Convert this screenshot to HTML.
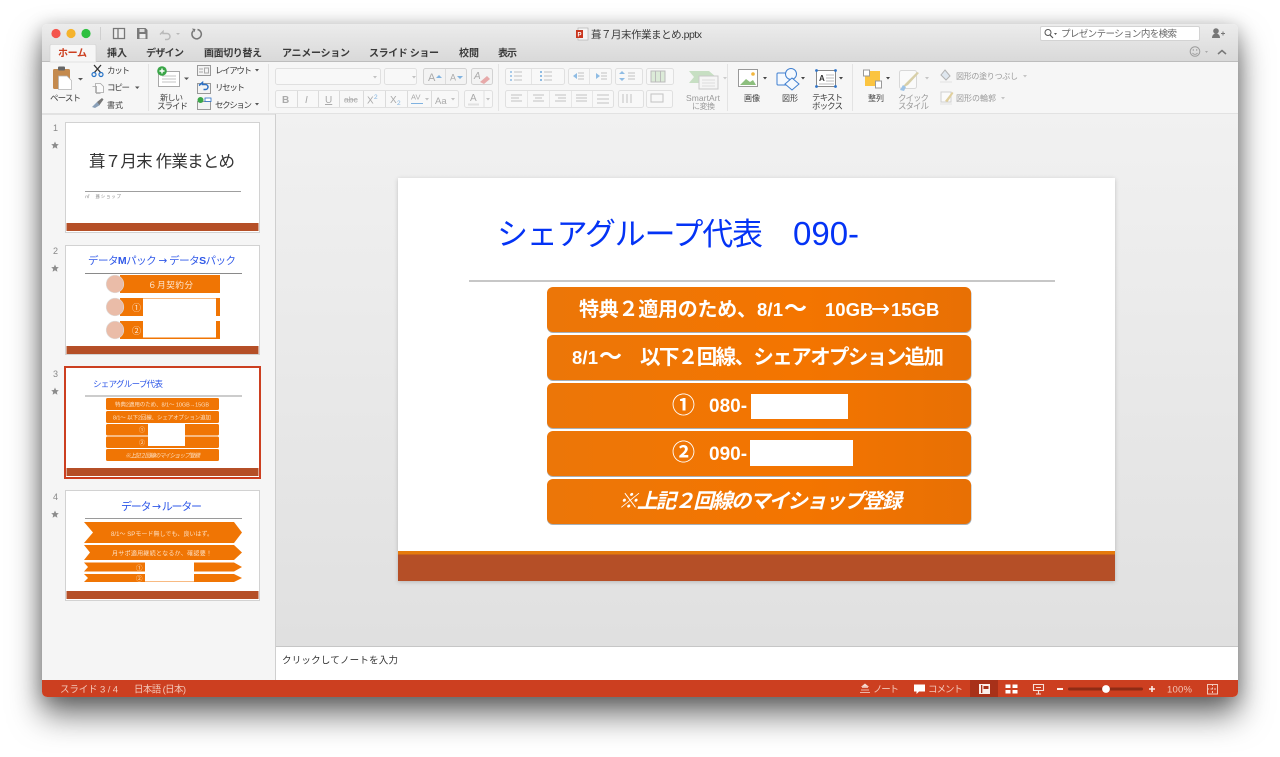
<!DOCTYPE html>
<html lang="ja"><head><meta charset="utf-8"><title>PowerPoint</title>
<style>
html,body{margin:0;padding:0;background:#fff;width:1280px;height:757px;overflow:hidden}
#win{position:absolute;left:42px;top:24px;width:1196px;height:673px;border-radius:5px;box-shadow:0 18px 32px rgba(0,0,0,.55),0 3px 18px rgba(0,0,0,.25)}
svg{position:absolute;left:0;top:0}
text{font-family:"Liberation Sans","Noto Sans CJK JP",sans-serif;dominant-baseline:auto}
.r{font-size:8.5px;fill:#3c3c3c}
.g{font-size:8.5px;fill:#9a9a9a}
.k{font-size:8px}
.tab{font-size:10px;font-weight:700;fill:#3a3a3a}
.s{font-size:9.5px;fill:#f3c9bb}
.w{fill:#fff;font-weight:700}
.ctl{fill:#f8f8f8;stroke:#e0e0e0}
.gl{fill:#b5b5b5;font-size:10px}
.ln{stroke:#c2c2c2;fill:none}
.ar{font-family:"DejaVu Sans",sans-serif}
</style></head><body>
<div id="win"></div>
<svg width="1280" height="757" viewBox="0 0 1280 757" xmlns="http://www.w3.org/2000/svg">
<defs>
<linearGradient id="tb" x1="0" y1="0" x2="0" y2="1"><stop offset="0" stop-color="#ececec"/><stop offset="1" stop-color="#d9d9d9"/></linearGradient>
<linearGradient id="mn" x1="0" y1="0" x2="0" y2="1"><stop offset="0" stop-color="#f1f1f1"/><stop offset="1" stop-color="#e0e0e0"/></linearGradient>
<linearGradient id="bar" x1="0" y1="0" x2="1" y2="0"><stop offset="0" stop-color="#ec7608"/><stop offset=".6" stop-color="#f47500"/><stop offset="1" stop-color="#e87004"/></linearGradient>
<clipPath id="wc"><rect x="42" y="24" width="1196" height="673" rx="5"/></clipPath>
<filter id="sl" x="-5%" y="-5%" width="110%" height="110%"><feDropShadow dx="0" dy="1" stdDeviation="2" flood-color="#000" flood-opacity=".2"/></filter>
</defs>
<g clip-path="url(#wc)">
<rect x="42" y="24" width="1196" height="37" fill="url(#tb)"/>
<rect x="42" y="61" width="1196" height="1" fill="#bdbdbd"/>
<rect x="42" y="62" width="1196" height="51" fill="#f6f6f6"/>
<rect x="42" y="113" width="1196" height="2" fill="#e2e2e2"/>
<rect x="42" y="115" width="233" height="565" fill="#f5f5f5"/>
<rect x="275" y="114" width="1" height="566" fill="#cfcfcf"/>
<rect x="276" y="114" width="962" height="532" fill="url(#mn)"/>
<rect x="276" y="646" width="962" height="1" fill="#c6c6c6"/>
<rect x="276" y="647" width="962" height="33" fill="#fff"/>
<rect x="42" y="680" width="1196" height="17" fill="#cc3f20"/>
</g>
<!-- traffic lights -->
<circle cx="56" cy="33.500" r="4.600" fill="#f4544c"/><circle cx="71" cy="33.500" r="4.600" fill="#f5b32c"/><circle cx="86" cy="33.500" r="4.600" fill="#2dc03f"/>
<rect x="100" y="27" width="1" height="13" fill="#cfcfcf"/>
<!-- toolbar icons -->
<path d="M113.500 28.500h11v10h-11zM118 28.500v10" fill="#eee" stroke="#777" stroke-width="1.300"/>
<path d="M137 28h8.500l2 2v9h-10.500z" fill="#7a7a7a"/><rect x="139.500" y="29" width="5" height="3" fill="#ddd"/><rect x="139.500" y="34" width="6" height="4.500" fill="#eee"/>
<path d="M160 34.500l3-3v2h4a3 3 0 0 1 0 6h-2" fill="none" stroke="#b9b9b9" stroke-width="1.500"/><path d="M176 33l2 2 2-2z" fill="#b9b9b9"/>
<path d="M197.500 29.500a4.700 4.700 0 1 1-4.200 1.300" fill="none" stroke="#777" stroke-width="1.500"/><path d="M192 28.500l3.500.5-1 3.200z" fill="#777"/>
<!-- title -->
<rect x="578" y="28" width="10" height="12" fill="#f5f5f5" stroke="#aaa" stroke-width=".6"/><rect x="576" y="30" width="7" height="8" fill="#c9361e"/><text x="577.500" y="36.500" font-size="6" fill="#fff" font-weight="700">P</text>
<text x="591" y="38" font-size="10.500" fill="#3a3a3a" textLength="111">葺７月末作業まとめ.pptx</text>
<!-- search -->
<rect x="1040.500" y="26.500" width="159" height="14" rx="1.500" fill="#fff" stroke="#d3d3d3"/>
<circle cx="1048" cy="32.500" r="3" fill="none" stroke="#555" stroke-width="1"/><path d="M1050 35l3 3" stroke="#555" stroke-width="1.200"/><path d="M1054 33l3 0-1.500 2z" fill="#555"/>
<text x="1061" y="37" font-size="9.500" fill="#666" textLength="116">プレゼンテーション内を検索</text>
<circle cx="1216" cy="31" r="2.800" fill="#777"/><path d="M1212 38c0-6 8-6 8 0z" fill="#777"/><path d="M1221 33.500h4M1223 31.500v4" stroke="#777" stroke-width="1"/>
<circle cx="1195" cy="51.500" r="4.800" fill="none" stroke="#9c9c9c"/><circle cx="1193.300" cy="50" r=".7" fill="#999"/><circle cx="1196.700" cy="50" r=".7" fill="#999"/><path d="M1192.500 53a3 3 0 0 0 5 0" fill="none" stroke="#999" stroke-width=".8"/>
<path d="M1205 51l3 0-1.500 2z" fill="#aaa"/><path d="M1218 54l4-3.500 4 3.500" fill="none" stroke="#777" stroke-width="1.500"/>
<!-- tabs -->
<path d="M50 61v-15a1.500 1.500 0 0 1 1.500-1.500h43a1.500 1.500 0 0 1 1.500 1.500v16h-46z" fill="#f6f6f6" stroke="#cfcfcf" stroke-width=".6"/>
<text x="58" y="56.500" font-size="10" font-weight="700" fill="#cc3f20" textLength="29">ホーム</text>
<text x="107" y="56.500" class="tab" textLength="20">挿入</text>
<text x="146" y="56.500" class="tab" textLength="38">デザイン</text>
<text x="204" y="56.500" class="tab" textLength="58">画面切り替え</text>
<text x="282" y="56.500" class="tab" textLength="68">アニメーション</text>
<text x="369" y="56.500" class="tab" textLength="70">スライド ショー</text>
<text x="459" y="56.500" class="tab" textLength="20">校閲</text>
<text x="498" y="56.500" class="tab" textLength="19">表示</text>
<!-- separators -->
<g fill="#e3e3e3"><rect x="148" y="64" width="1" height="47"/><rect x="268" y="64" width="1" height="47"/><rect x="498" y="64" width="1" height="47"/><rect x="727" y="64" width="1" height="47"/><rect x="852" y="64" width="1" height="47"/></g>
<!-- paste -->
<rect x="53" y="69" width="17" height="20" rx="1.500" fill="#c48a4e"/><rect x="58" y="66.500" width="7" height="4" rx="1" fill="#666"/>
<path d="M58.500 76h8.500l4.500 4.500v9h-13z" fill="#fff" stroke="#b3b3b3" stroke-width=".7"/>
<path d="M78 78h5l-2.500 2.500z" fill="#555"/>
<text x="50" y="101" class="r" textLength="31">ペースト</text>
<!-- scissors -->
<path d="M94 65l7 8M101 65l-7 8" stroke="#333" stroke-width="1.300"/><circle cx="94" cy="74.500" r="2" fill="none" stroke="#2874c8" stroke-width="1.200"/><circle cx="101" cy="74.500" r="2" fill="none" stroke="#2874c8" stroke-width="1.200"/>
<text x="107" y="73.500" class="r" textLength="23">カット</text>
<path d="M95.500 83.500h5l3 3v6h-8z" fill="#fafafa" stroke="#a5a5a5" stroke-width=".8"/><path d="M92.500 86.500h4v7h4" fill="none" stroke="#a5a5a5" stroke-width=".8"/>
<text x="107" y="90.500" class="r" textLength="23">コピー</text><path d="M135 86.500h4.500l-2.250 2.500z" fill="#555"/>
<path d="M92 107l5-5 3 3-5 3z" fill="#8aa0b8"/><path d="M97 102l5-4 1.500 1.500-4 5.500z" fill="#777"/>
<text x="107" y="108" class="r k" textLength="16">書式</text>
<!-- new slide -->
<rect x="158.500" y="71.500" width="21" height="15" fill="#fff" stroke="#a8a8a8"/><path d="M162 76h14M162 79h14M162 82h14" stroke="#c3c3c3"/>
<circle cx="162" cy="71" r="4.800" fill="#3aa648"/><path d="M159.500 71h5M162 68.500v5" stroke="#fff" stroke-width="1.400"/>
<path d="M184 77.500h5l-2.500 2.500z" fill="#555"/>
<text x="160" y="100.500" class="r k" textLength="23">新しい</text><text x="157" y="109" class="r" textLength="31">スライド</text>
<!-- layout group -->
<rect x="197.500" y="65.500" width="13" height="10" fill="#f3f3f3" stroke="#999"/><path d="M199 69h4M199 72h4M204.500 68h4v5h-4z" stroke="#aaa" fill="none"/>
<text x="215" y="73.500" class="r" textLength="37">レイアウト</text><path d="M255 69h4l-2 2.500z" fill="#555"/>
<rect x="197.500" y="83.500" width="13" height="10" fill="#f3f3f3" stroke="#999"/><path d="M199 85.500l3.500-3v2h3a2.500 2.500 0 0 1 0 5h-2" fill="none" stroke="#2b6fc4" stroke-width="1.500"/>
<text x="215" y="90.500" class="r" textLength="30">リセット</text>
<rect x="197.500" y="101.500" width="13" height="8" fill="#f3f3f3" stroke="#999"/><circle cx="200.500" cy="100" r="3" fill="#3aa648"/><rect x="205" y="98" width="6" height="3.500" fill="#fff" stroke="#2b6fc4" stroke-width=".8"/>
<text x="215" y="108" class="r" textLength="37">セクション</text><path d="M255 103h4l-2 2.500z" fill="#555"/>
<!-- font group row 1 -->
<rect x="275.500" y="68.500" width="105" height="16" rx="2" class="ctl"/><path d="M373 76h4l-2 2.500z" fill="#c2c2c2"/>
<rect x="384.500" y="68.500" width="32" height="16" rx="2" class="ctl"/><path d="M412 76h4l-2 2.500z" fill="#c2c2c2"/>
<rect x="423.500" y="68.500" width="43" height="16" rx="2" fill="#f3f3f3" stroke="#d2d2d2"/><path d="M445.500 69v15" stroke="#dcdcdc"/>
<text x="428" y="81" font-size="11" fill="#aaa">A</text><path d="M436 78l3-3 3 3z" fill="#7fb2e0"/><text x="450" y="80.500" font-size="9" fill="#aaa">A</text><path d="M457 76h6l-3 3z" fill="#7fb2e0"/>
<rect x="471.500" y="68.500" width="21" height="16" rx="2" fill="#f3f3f3" stroke="#d2d2d2"/><text x="474" y="79" font-size="10" font-style="italic" fill="#aaa">A</text><path d="M480 82l7-6 3 3-6 5z" fill="#e7a9a9"/>
<!-- font group row 2 -->
<rect x="275.500" y="90.500" width="183" height="17" rx="2" class="ctl"/>
<path class="ln" stroke-opacity=".55" d="M297.500 91v16M318.500 91v16M339.500 91v16M363.500 91v16M385.500 91v16M407.500 91v16M431.500 91v16"/>
<text x="282" y="103" font-size="10" font-weight="700" fill="#aaa">B</text><text x="305" y="103" font-size="10" font-style="italic" fill="#aaa">I</text><text x="325" y="103" font-size="10" fill="#aaa" text-decoration="underline">U</text>
<text x="344" y="102.500" font-size="8.500" fill="#aaa" text-decoration="line-through">abc</text>
<text x="367" y="103.500" font-size="10" fill="#aaa">X</text><text x="374" y="99" font-size="6.500" fill="#7fb2e0">2</text>
<text x="390" y="103" font-size="10" fill="#aaa">X</text><text x="397" y="105" font-size="6.500" fill="#7fb2e0">2</text>
<text x="411" y="99.500" font-size="7.500" fill="#aaa">AV</text><path d="M411 103.500h12" stroke="#7fb2e0"/><path d="M425 98h4l-2 2.500zM451 98h4l-2 2.500z" fill="#c2c2c2"/>
<text x="435" y="104" font-size="9.500" fill="#aaa">Aa</text>
<rect x="464.500" y="90.500" width="28" height="17" rx="2" class="ctl"/><text x="470" y="101" font-size="10" fill="#aaa">A</text><path d="M468 104.500h11" stroke="#e1e1e1" stroke-width="2"/><path d="M484 91v16" stroke="#e0e0e0"/><path d="M486 98h4l-2 2.500z" fill="#c2c2c2"/>
<!-- paragraph row 1 -->
<rect x="505.500" y="68.500" width="59" height="16" rx="2" class="ctl"/><rect x="568.500" y="68.500" width="43" height="16" rx="2" class="ctl"/><rect x="615.500" y="68.500" width="27" height="16" rx="2" class="ctl"/><rect x="646.500" y="68.500" width="27" height="16" rx="2" class="ctl"/>
<path class="ln" d="M514 72h8M514 76h8M514 80h8M544 72h8M544 76h8M544 80h8M578 73h6M578 76h6M578 79h6M601 73h6M601 76h6M601 79h6M628 73h7M628 76h7M628 79h7"/>
<g fill="#8fbce4"><circle cx="511" cy="72" r="1"/><circle cx="511" cy="76" r="1"/><circle cx="511" cy="80" r="1"/><rect x="540" y="71" width="2" height="2"/><rect x="540" y="75" width="2" height="2"/><rect x="540" y="79" width="2" height="2"/><path d="M573 76l4-3v6zM600 76l-4-3v6zM622 71l3 3h-6zM622 81l3-3h-6z"/></g>
<path d="M531.500 69v15M589.500 69v15" stroke="#e4e4e4"/><rect x="651" y="71" width="14" height="11" fill="#dcebd8" stroke="#bbb"/><path d="M655.500 71v11M660.500 71v11" stroke="#bbb"/>
<!-- paragraph row 2 -->
<rect x="505.500" y="90.500" width="108" height="17" rx="2" class="ctl"/><rect x="618.500" y="90.500" width="25" height="17" rx="2" class="ctl"/><rect x="646.500" y="90.500" width="26" height="17" rx="2" class="ctl"/>
<path d="M527.500 91v16M549.500 91v16M571.500 91v16M592.500 91v16" stroke="#e6e6e6"/>
<path class="ln" d="M511 95h11M511 98h8M511 101h11M533 95h11M535 98h7M533 101h11M555 95h11M558 98h8M555 101h11M576 95h11M576 98h11M576 101h11M597 95h12M597 99h12M597 103h12M623 94v9M627 94v9M631 94v9M651 94h12v8h-12z"/>
<!-- smartart -->
<path d="M689 71h20l7 6-7 6h-20l5-6z" fill="#c7dfc3"/><rect x="699" y="76" width="19" height="13" fill="#f5f5f5" stroke="#c9c9c9"/><path d="M702 80h13M702 83h13M702 86h13" stroke="#ddd"/>
<path d="M723 77h4l-2 2.500z" fill="#ccc"/>
<text x="686" y="101" class="g" textLength="34">SmartArt</text><text x="692" y="109" class="g k" textLength="23">に変換</text>
<!-- picture -->
<rect x="738.500" y="69.500" width="19" height="17" fill="#fff" stroke="#999"/><path d="M740 85l6-6 4 3 3-2 3 5z" fill="#8dbf7e"/><circle cx="753" cy="74" r="1.800" fill="#f3b63d"/>
<path d="M763 77h4l-2 2.500z" fill="#444"/><text x="744" y="101" class="r k" textLength="16">画像</text>
<!-- shapes -->
<rect x="777" y="73" width="13" height="12" rx="1" fill="#f5f9fe" stroke="#3f7fd0"/><circle cx="791" cy="74" r="5.500" fill="#f5f9fe" stroke="#3f7fd0"/><path d="M792 78l7 6-7 6-7-6z" fill="#f5f9fe" stroke="#3f7fd0"/>
<path d="M801 77h4l-2 2.500z" fill="#444"/><text x="782" y="101" class="r k" textLength="16">図形</text>
<!-- textbox -->
<rect x="816.500" y="70.500" width="19" height="16" fill="#fff" stroke="#888"/><text x="819" y="81" font-size="8" font-weight="700" fill="#333">A</text><path d="M826 75h8M826 78h8M826 81h8M819 84h15" stroke="#bbb"/>
<g fill="#2f74c8"><circle cx="816.500" cy="70.500" r="1.400"/><circle cx="835.500" cy="70.500" r="1.400"/><circle cx="816.500" cy="86.500" r="1.400"/><circle cx="835.500" cy="86.500" r="1.400"/></g>
<path d="M839 77h4l-2 2.500z" fill="#444"/><text x="812" y="100.500" class="r" textLength="31">テキスト</text><text x="812" y="109" class="r" textLength="31">ボックス</text>
<!-- arrange -->
<rect x="865" y="71" width="15" height="15" fill="#fbc440"/><rect x="863.500" y="70" width="6" height="6" fill="#fff" stroke="#999"/><rect x="875.500" y="81" width="6" height="7" fill="#fff" stroke="#999"/>
<path d="M886 77h4l-2 2.500z" fill="#444"/><text x="868" y="101" class="r k" textLength="16">整列</text>
<!-- quick style -->
<rect x="899.500" y="70.500" width="17" height="18" rx="2" fill="#fafafa" stroke="#d8d8d8"/><path d="M902 88l3-4 12-12 2 1-11 12z" fill="#d8cfa8"/><path d="M900 90l3-5 3 2-2 4z" fill="#9dc3e6"/><path d="M925 77h4l-2 2.500z" fill="#c5c5c5"/>
<text x="898" y="101" class="g" textLength="31">クイック</text><text x="898" y="109" class="g" textLength="31">スタイル</text>
<!-- fill / outline -->
<path d="M945 70l5 6-4 4-5-5z" fill="#dfe7ef" stroke="#b3b3b3"/><rect x="940" y="81" width="12" height="2" fill="#ececec"/><text x="956" y="79" class="g k" textLength="62">図形の塗りつぶし</text><path d="M1023 75h4l-2 2.500z" fill="#c5c5c5"/>
<rect x="941" y="92" width="10" height="10" fill="#fafafa" stroke="#d0d0d0"/><path d="M945 101l7-9 1.500 1-6 9z" fill="#e0cf9c"/><rect x="940" y="103" width="12" height="2" fill="#ececec"/><text x="956" y="101" class="g k" textLength="40">図形の輪郭</text><path d="M1001 97h4l-2 2.500z" fill="#c5c5c5"/>

<!-- Thumb numbers -->
<g font-size="9" fill="#888"><text x="53" y="131">1</text><text x="53" y="254">2</text><text x="53" y="377">3</text><text x="53" y="500">4</text></g>
<g fill="#8c8c8c"><path id="st" d="M55 141.500l1.100 2.500 2.700.2-2 1.800.6 2.700-2.400-1.400-2.400 1.400.6-2.700-2-1.800 2.700-.2z"/><use href="#st" y="123"/><use href="#st" y="246"/><use href="#st" y="369"/></g>
<!-- Thumb 1 -->
<rect x="65.500" y="122.500" width="194" height="110" fill="#fff" stroke="#d2d2d2"/>
<text x="89" y="167" font-size="16.500" fill="#333" textLength="146">葺７月末 作業まとめ</text>
<rect x="85" y="191" width="156" height="1" fill="#9f9f9f"/>
<text x="85" y="198" font-size="4.500" fill="#888" textLength="36">㎡　葺ショップ</text>
<rect x="66.500" y="223" width="192" height="8" fill="#b54f27"/>
<!-- Thumb 2 -->
<rect x="65.500" y="245.500" width="194" height="109" fill="#fff" stroke="#d2d2d2"/>
<text x="88" y="264" font-size="10.500" fill="#2f58e8" textLength="148">データ<tspan font-weight="700">M</tspan>パック <tspan class="ar">→</tspan> データ<tspan font-weight="700">S</tspan>パック</text>
<rect x="85" y="273" width="157" height="1" fill="#8a8a8a"/>
<g fill="#f07504"><rect x="120" y="275" width="100" height="18"/><rect x="120" y="298" width="100" height="18"/><rect x="120" y="321" width="100" height="18"/></g>
<g fill="#eabca8" stroke="#ddd" stroke-width=".6"><circle cx="115" cy="284" r="8.800"/><circle cx="115" cy="307" r="8.800"/><circle cx="115" cy="330" r="8.800"/></g>
<text x="148" y="288" font-size="8.500" fill="#fde6d0" textLength="45">６月契約分</text>
<text x="132" y="311" font-size="9" fill="#fde6d0">①</text><text x="132" y="334" font-size="9" fill="#fde6d0">②</text>
<rect x="143" y="298.500" width="73" height="17.500" fill="#fff"/><rect x="143" y="321" width="73" height="16.500" fill="#fff"/>
<rect x="66.500" y="346" width="192" height="8" fill="#b54f27"/>
<!-- Thumb 3 -->
<rect x="65" y="367" width="195" height="111" fill="#fff" stroke="#cc3f20" stroke-width="2"/>
<text x="93" y="387" font-size="8.500" fill="#2f58e8" textLength="70">シェアグループ代表</text>
<rect x="85" y="395.500" width="157" height="1" fill="#9a9a9a"/>
<g fill="#f07504"><rect x="106" y="398" width="113" height="12" rx="1.500"/><rect x="106" y="411" width="113" height="12" rx="1.500"/><rect x="106" y="424" width="113" height="11.500" rx="1.500"/><rect x="106" y="436.500" width="113" height="11.500" rx="1.500"/><rect x="106" y="449" width="113" height="12" rx="1.500"/></g>
<g fill="#fde0c4"><text x="115" y="406.500" font-size="5.500" textLength="94">特典2適用のため、8/1～ 10GB→15GB</text><text x="113" y="419.500" font-size="5.500" textLength="98">8/1～ 以下2回線、シェアオプション追加</text><text x="139" y="432" font-size="6">①</text><text x="139" y="445" font-size="6">②</text><text x="125" y="457.500" font-size="5.800" font-style="italic" textLength="75">※上記２回線のマイショップ登録</text></g>
<rect x="148" y="423" width="37" height="23" fill="#fff"/>
<rect x="66.500" y="468" width="192" height="8" fill="#b54f27"/>
<!-- Thumb 4 -->
<rect x="65.500" y="490.500" width="194" height="110" fill="#fff" stroke="#d2d2d2"/>
<text x="121" y="510" font-size="11" fill="#2f58e8" textLength="81">データ <tspan class="ar">→</tspan> ルーター</text>
<rect x="85" y="518" width="157" height="1" fill="#9a9a9a"/>
<g fill="#f07504"><path d="M84 522h150l8 10.500-8 10.500h-150l9-10.500z"/><path d="M84 545h150l8 7.500-8 7.500h-150l6-7.500z"/><path d="M84 562.500h150l8 4.500-8 4.500h-150l4-4.500z"/><path d="M84 574h150l8 4-8 4h-150l4-4z"/></g>
<g fill="#fde0c4"><text x="111" y="536" font-size="6" textLength="102">8/1～ SPモード無しでも、良いはず。</text><text x="112" y="555.500" font-size="6" textLength="100">月サポ適用継続となるか、確認要！</text><text x="136" y="570" font-size="6.500">①</text><text x="136" y="580.500" font-size="6.500">②</text></g>
<rect x="145" y="562" width="49" height="19.500" fill="#fff"/>
<rect x="66.500" y="591" width="192" height="8" fill="#b54f27"/>

<!-- Main slide -->
<rect x="398" y="178" width="717" height="403" fill="#fff" filter="url(#sl)"/>
<text x="497" y="245" font-size="31" fill="#0433f5" textLength="266">シェアグループ代表</text>
<text x="793" y="245" font-size="33" fill="#0433f5">090-</text>
<rect x="469" y="280.500" width="586" height="1" fill="#8f8f8f"/>
<g fill="#a9b0b6"><rect x="547" y="288" width="424.500" height="45" rx="6"/><rect x="547" y="336" width="424.500" height="45" rx="6"/><rect x="547" y="384" width="424.500" height="45" rx="6"/><rect x="547" y="432" width="424.500" height="45" rx="6"/><rect x="547" y="480" width="424.500" height="45" rx="6"/></g>
<g fill="url(#bar)">
<rect x="547" y="287" width="424" height="45" rx="6"/><rect x="547" y="335" width="424" height="45" rx="6"/><rect x="547" y="383" width="424" height="45" rx="6"/><rect x="547" y="431" width="424" height="45" rx="6"/><rect x="547" y="479" width="424" height="45" rx="6"/></g>
<text x="579" y="316" font-size="20" class="w" textLength="178">特典２適用のため、</text>
<text x="757" y="316" font-size="18.500" class="w" textLength="26">8/1</text>
<text x="784" y="316" font-size="23" class="w">～</text>
<text x="825" y="316" font-size="18.500" class="w">10GB</text>
<text x="871" y="316" font-size="23" class="w ar" style="font-weight:400">→</text>
<text x="891" y="316" font-size="18.500" class="w">15GB</text>
<text x="572" y="364" font-size="18.500" class="w" textLength="26">8/1</text>
<text x="599" y="364" font-size="23" class="w">～</text>
<text x="640" y="364" font-size="20.500" class="w" textLength="304">以下２回線、シェアオプション追加</text>
<text x="672" y="413" font-size="23" class="w">①</text>
<text x="709" y="412" font-size="19" class="w">080-</text>
<rect x="751" y="394" width="97" height="25" fill="#fff"/>
<text x="672" y="460" font-size="23" class="w">②</text>
<text x="709" y="460" font-size="19" class="w">090-</text>
<rect x="750" y="440" width="103" height="26" fill="#fff"/>
<text x="618" y="508" font-size="20.500" class="w" font-style="italic" textLength="284">※上記２回線のマイショップ登録</text>
<rect x="398" y="551" width="717" height="3.500" fill="#e57a0c"/>
<rect x="398" y="554.500" width="717" height="26.500" fill="#b54f27"/>
<!-- notes -->
<text x="282" y="663.500" font-size="9.500" fill="#333" textLength="116">クリックしてノートを入力</text>
<!-- status -->
<text x="60" y="692.500" class="s" textLength="58">スライド 3 / 4</text>
<text x="134" y="692.500" class="s" textLength="52">日本語 (日本)</text>
<path d="M860 692.500h10M861 690h8M862 687.500h6M865 684l3 2.500h-6z" stroke="#f6dcd3" fill="#f6dcd3" stroke-width=".8"/>
<text x="873" y="692.500" class="s" textLength="26">ノート</text>
<path d="M914 684.500h11v7h-6l-2.500 2.500v-2.500h-2.500z" fill="#fff"/>
<text x="928" y="692.500" class="s" textLength="35">コメント</text>
<rect x="970" y="680" width="28" height="17" fill="#a83119"/>
<rect x="979" y="684" width="11" height="10" fill="#fbeee9"/><rect x="981" y="685" width="1.300" height="8" fill="#a83119"/><rect x="983.500" y="686" width="5" height="3" fill="#a83119"/>
<g fill="#fff"><rect x="1005.500" y="684.500" width="5" height="3.500"/><rect x="1012.500" y="684.500" width="5" height="3.500"/><rect x="1005.500" y="690" width="5" height="3.500"/><rect x="1012.500" y="690" width="5" height="3.500"/></g>
<path d="M1033.500 684.500h10v6h-10zM1038.500 690.500v3M1036 694h5M1036 687.500h5" fill="none" stroke="#f8e0d8" stroke-width="1.100"/>
<rect x="1057" y="688" width="6" height="2" fill="#fbeee9"/>
<rect x="1068" y="687.500" width="75" height="3" rx="1.500" fill="#8e2b15"/>
<circle cx="1106" cy="689" r="3.900" fill="#fff"/>
<path d="M1149 689h6M1152 686v6" stroke="#fbeee9" stroke-width="1.600"/>
<text x="1167" y="692.500" class="s" textLength="25">100%</text>
<rect x="1207.500" y="684.500" width="10" height="9.500" fill="none" stroke="#f3c9bb"/><path d="M1212.500 684v10M1207 689h11" stroke="#f3c9bb" stroke-dasharray="2 1.500"/>
</svg>
</body></html>
